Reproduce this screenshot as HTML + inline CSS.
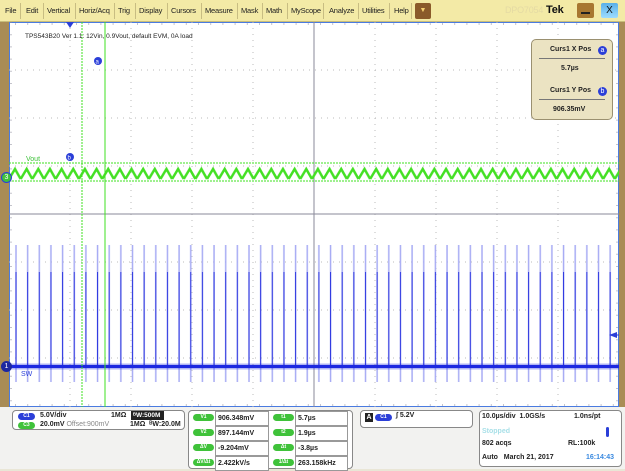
<!DOCTYPE html>
<html><head><meta charset="utf-8"><style>
*{margin:0;padding:0;box-sizing:border-box}
body{width:625px;height:469px;overflow:hidden;background:#e9e6d6;font-family:"Liberation Sans",sans-serif;position:relative}
.menu{position:absolute;left:0;top:0;width:625px;height:22px;background:#f3eaa6;border-bottom:1px solid #c9be7a}
.menu span{position:absolute;top:6px;font-size:7.5px;color:#222;letter-spacing:-0.2px}
.sep{position:absolute;top:3px;width:1px;height:16px;background:#c8bd82}
.abs{position:absolute}
.box{position:absolute;background:#fff;border:1px solid #888;border-radius:4px}
.t{position:absolute;font-size:7px;font-weight:bold;color:#222;white-space:nowrap}
.pill{position:absolute;height:9px;width:22px;border-radius:5px;font-size:5px;color:#fff;text-align:center;line-height:9px;font-weight:bold}
.g{background:#3fc23a}.b{background:#2b3fd8}
.cell{position:absolute;border:1px solid #999;background:#fff;height:15px;font-size:7px;font-weight:bold;padding:3px 2px;color:#222}
</style></head><body>
<div class="menu">
<span style="left:5px">File</span><div class="sep" style="left:20px"></div>
<span style="left:26px">Edit</span><div class="sep" style="left:43px"></div>
<span style="left:47px">Vertical</span><div class="sep" style="left:75px"></div>
<span style="left:79px">Horiz/Acq</span><div class="sep" style="left:114px"></div>
<span style="left:118px">Trig</span><div class="sep" style="left:135px"></div>
<span style="left:139px">Display</span><div class="sep" style="left:167px"></div>
<span style="left:171px">Cursors</span><div class="sep" style="left:201px"></div>
<span style="left:205px">Measure</span><div class="sep" style="left:237px"></div>
<span style="left:241px">Mask</span><div class="sep" style="left:262px"></div>
<span style="left:266px">Math</span><div class="sep" style="left:287px"></div>
<span style="left:291px">MyScope</span><div class="sep" style="left:323px"></div>
<span style="left:329px">Analyze</span><div class="sep" style="left:358px"></div>
<span style="left:362px">Utilities</span><div class="sep" style="left:389px"></div>
<span style="left:394px">Help</span><div class="sep" style="left:411px"></div>
<div class="abs" style="left:415px;top:3px;width:16px;height:16px;background:#8a5a2a;border-radius:2px;color:#f5d070;font-size:7px;text-align:center;line-height:16px">▼</div>
<span style="left:505px;top:5px;font-size:9px;color:#e4daa4">DPO7054</span>
<span style="left:546px;top:4px;font-size:11px;font-weight:bold;color:#111">Tek</span>
<div class="abs" style="left:577px;top:3px;width:17px;height:15px;background:#a87830;border-radius:2px"></div>
<div class="abs" style="left:581px;top:12px;width:9px;height:2px;background:#222"></div>
<div class="abs" style="left:601px;top:3px;width:17px;height:15px;background:linear-gradient(#5ab0e8,#9fdcff);border-radius:2px;font-size:10px;text-align:center;line-height:15px;color:#111">X</div>
</div>
<div class="abs" style="left:0;top:22px;width:9px;height:385px;background:#a98c55"></div>
<div class="abs" style="left:619px;top:22px;width:6px;height:385px;background:#a98c55"></div>
<svg class="abs" style="left:9px;top:22px" width="610" height="385" viewBox="0 0 610 385">
<defs>
<pattern id="sp" x="5" y="0" width="11.65" height="385" patternUnits="userSpaceOnUse">
<line x1="2" y1="223" x2="2" y2="360" stroke="#a8acf4" stroke-width="1.5"/>
<line x1="2" y1="250" x2="2" y2="344" stroke="#2a34e0" stroke-width="1"/>
</pattern>
<pattern id="gw" x="0" y="0" width="11.65" height="385" patternUnits="userSpaceOnUse">
<polyline points="0,157 6,147 11.65,157" fill="none" stroke="#44e024" stroke-width="2.5"/>
</pattern>
</defs>
<rect width="610" height="385" fill="#fff" stroke="#4a7be0" stroke-width="2"/>
<g stroke="#bbb" stroke-width="1" stroke-dasharray="1 5">
<line x1="61" y1="0" x2="61" y2="385"/><line x1="122" y1="0" x2="122" y2="385"/><line x1="183" y1="0" x2="183" y2="385"/><line x1="244" y1="0" x2="244" y2="385"/><line x1="366" y1="0" x2="366" y2="385"/><line x1="427" y1="0" x2="427" y2="385"/><line x1="488" y1="0" x2="488" y2="385"/><line x1="549" y1="0" x2="549" y2="385"/>
<line x1="0" y1="48" x2="610" y2="48"/><line x1="0" y1="96" x2="610" y2="96"/><line x1="0" y1="144" x2="610" y2="144"/><line x1="0" y1="240" x2="610" y2="240"/><line x1="0" y1="288" x2="610" y2="288"/><line x1="0" y1="336" x2="610" y2="336"/>
</g>
<line x1="305" y1="0" x2="305" y2="385" stroke="#8a8a9a" stroke-width="1"/>
<line x1="0" y1="192" x2="610" y2="192" stroke="#8a8a9a" stroke-width="1"/>
<g stroke="#8a8a9a" stroke-dasharray="1 11.2">
<line x1="0" y1="2" x2="610" y2="2" stroke-dashoffset="-6"/>
<line x1="0" y1="383" x2="610" y2="383" stroke-dashoffset="-6"/>
<line x1="2" y1="0" x2="2" y2="385"/>
<line x1="608" y1="0" x2="608" y2="385"/>
</g>
<rect x="5" y="0" width="605" height="385" fill="url(#sp)"/>
<rect x="0" y="343" width="610" height="3" fill="#1d28e0"/>
<rect x="0" y="341.5" width="610" height="6" fill="#1d28e0" opacity="0.35"/>
<rect x="0" y="144" width="610" height="20" fill="url(#gw)"/>
<line x1="0" y1="141" x2="610" y2="141" stroke="#3fe020" stroke-width="1" stroke-dasharray="2 1"/>
<line x1="0" y1="159" x2="610" y2="159" stroke="#3fe020" stroke-width="1" stroke-dasharray="2 1"/>
<line x1="73" y1="0" x2="73" y2="385" stroke="#3fe020" stroke-dasharray="2 1"/>
<line x1="96" y1="0" x2="96" y2="385" stroke="#3fe020"/>
<path d="M57,0 L65,0 L61,6Z" fill="#2b3fd8"/>
<path d="M600,313 L608,310 L608,316Z" fill="#2b3fd8"/><line x1="604" y1="313" x2="614" y2="313" stroke="#2b3fd8"/>
<text x="16" y="16" font-size="6.5" fill="#222" font-family="Liberation Sans">TPS543B20 Ver 1.1: 12Vin, 0.9Vout,  default EVM, 0A load</text>
<text x="17" y="139" font-size="7" fill="#3fc23a" font-family="Liberation Sans">Vout</text>
<text x="12" y="354" font-size="7" fill="#2b3fd8" font-family="Liberation Sans">SW</text>
<circle cx="89" cy="39" r="4" fill="#2b3fd8"/><text x="86.5" y="41.5" font-size="6" fill="#fff">a</text>
<circle cx="61" cy="135" r="4" fill="#2b3fd8"/><text x="58.5" y="137.5" font-size="6" fill="#fff">b</text>
</svg>
<div class="abs" style="left:1px;top:172px;width:11px;height:11px;border-radius:6px;background:#3fc23a;border:1px solid #2b3fd8;font-size:7px;color:#fff;text-align:center;line-height:9px">3</div>
<div class="abs" style="left:1px;top:361px;width:11px;height:11px;border-radius:6px;background:#1d28a0;font-size:7px;color:#fff;text-align:center;line-height:11px">1</div>
<div class="abs" style="left:531px;top:39px;width:82px;height:81px;background:#ebe3c2;border:1px solid #9a9070;border-radius:5px">
<div class="t" style="left:18px;top:6px">Curs1 X Pos</div>
<div class="abs" style="left:66px;top:6px;width:9px;height:9px;border-radius:5px;background:#2b3fd8;color:#fff;font-size:7px;text-align:center;line-height:9px">a</div>
<div class="abs" style="left:7px;top:18px;width:66px;height:1px;background:#777"></div>
<div class="t" style="left:29px;top:25px">5.7µs</div>
<div class="t" style="left:18px;top:47px">Curs1 Y Pos</div>
<div class="abs" style="left:66px;top:47px;width:9px;height:9px;border-radius:5px;background:#2b3fd8;color:#fff;font-size:7px;text-align:center;line-height:9px">b</div>
<div class="abs" style="left:7px;top:59px;width:66px;height:1px;background:#777"></div>
<div class="t" style="left:21px;top:66px">906.35mV</div>
</div>
<div class="abs" style="left:0;top:407px;width:625px;height:62px;background:#f2f2f0"></div>
<div class="box" style="left:12px;top:410px;width:173px;height:20px"></div>
<div class="pill b" style="left:18px;top:413px;width:17px;height:7px;line-height:7px">C1</div>
<div class="t" style="left:40px;top:412px">5.0V/div</div>
<div class="t" style="left:111px;top:412px">1MΩ</div>
<div class="abs" style="left:131px;top:411px;width:33px;height:9px;background:#222;color:#fff;font-size:6.5px;font-weight:bold;line-height:9px;padding-left:2px">ᴮW:500M</div>
<div class="pill g" style="left:18px;top:422px;width:17px;height:7px;line-height:7px">C3</div>
<div class="t" style="left:40px;top:421px">20.0mV <span style="color:#888;font-weight:normal">Offset:900mV</span></div>
<div class="t" style="left:130px;top:421px">1MΩ &nbsp;ᴮW:20.0M</div>
<div class="box" style="left:188px;top:410px;width:165px;height:59px"></div>
<div class="pill g" style="left:193px;top:414px;width:21px;height:7px;line-height:7px">V1</div>
<div class="cell" style="left:215px;top:411px;width:54px">906.348mV</div>
<div class="pill g" style="left:193px;top:429px;width:21px;height:7px;line-height:7px">V2</div>
<div class="cell" style="left:215px;top:426px;width:54px">897.144mV</div>
<div class="pill g" style="left:193px;top:444px;width:21px;height:7px;line-height:7px">ΔV</div>
<div class="cell" style="left:215px;top:441px;width:54px">-9.204mV</div>
<div class="pill g" style="left:193px;top:459px;width:21px;height:7px;line-height:7px">ΔV/Δt</div>
<div class="cell" style="left:215px;top:456px;width:54px">2.422kV/s</div>
<div class="pill g" style="left:273px;top:414px;width:21px;height:7px;line-height:7px">t1</div>
<div class="cell" style="left:295px;top:411px;width:53px">5.7µs</div>
<div class="pill g" style="left:273px;top:429px;width:21px;height:7px;line-height:7px">t2</div>
<div class="cell" style="left:295px;top:426px;width:53px">1.9µs</div>
<div class="pill g" style="left:273px;top:444px;width:21px;height:7px;line-height:7px">Δt</div>
<div class="cell" style="left:295px;top:441px;width:53px">-3.8µs</div>
<div class="pill g" style="left:273px;top:459px;width:21px;height:7px;line-height:7px">1/Δt</div>
<div class="cell" style="left:295px;top:456px;width:53px">263.158kHz</div>
<div class="box" style="left:360px;top:410px;width:113px;height:18px"></div>
<div class="abs" style="left:365px;top:413px;width:8px;height:9px;background:#222;color:#fff;font-size:7px;font-weight:bold;text-align:center;line-height:9px">A</div>
<div class="pill b" style="left:375px;top:414px;width:17px;height:7px;line-height:7px">C1</div>
<div class="t" style="left:396px;top:412px">∫ 5.2V</div>
<div class="box" style="left:479px;top:410px;width:143px;height:57px"></div>
<div class="t" style="left:482px;top:413px">10.0µs/div &nbsp;1.0GS/s</div>
<div class="t" style="left:574px;top:413px">1.0ns/pt</div>
<div class="t" style="left:482px;top:428px;color:#a8e0e8">Stopped</div>
<div class="abs" style="left:606px;top:427px;width:3px;height:10px;background:#2b3fd8;border-radius:2px"></div>
<div class="t" style="left:482px;top:440px">802 acqs</div>
<div class="t" style="left:568px;top:440px">RL:100k</div>
<div class="t" style="left:482px;top:454px">Auto &nbsp;&nbsp;March 21, 2017</div>
<div class="t" style="left:586px;top:454px;color:#3a8ae0">16:14:43</div>
</body></html>
